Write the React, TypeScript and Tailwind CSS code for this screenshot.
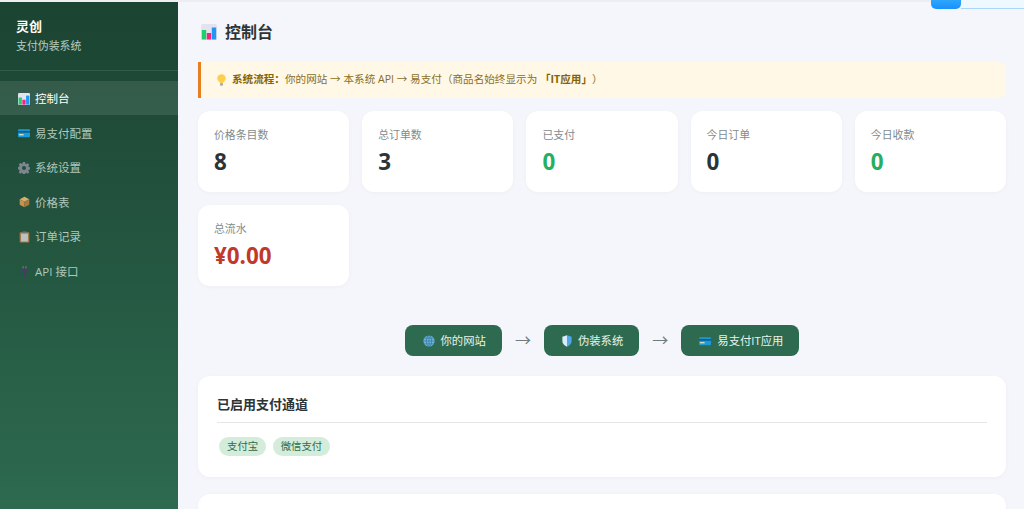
import React from "react";

const Chart = ({ s = 14 }: { s?: number }) => (
  <svg width={s} height={s} viewBox="0 0 16 16" className="shrink-0">
    <rect x="0" y="0" width="16" height="16" rx="1.5" fill="#e4e2ee" />
    <rect x="0.8" y="6" width="4.4" height="9.5" fill="#1fcf6c" />
    <rect x="5.8" y="9" width="4.4" height="6.5" fill="#f0267f" />
    <rect x="10.8" y="3.5" width="4.4" height="12" fill="#2196f3" />
  </svg>
);
const Card = ({ s = 12 }: { s?: number }) => (
  <svg width={s} height={s} viewBox="0 0 16 16" className="shrink-0">
    <rect x="0" y="3" width="16" height="10.5" rx="1.2" fill="#1d9bd8" />
    <rect x="0" y="5.2" width="16" height="2.4" fill="#0b5f8f" />
    <rect x="1.5" y="9.5" width="6" height="1.6" fill="#f5e6b8" />
  </svg>
);
const Gear = () => (
  <svg width="12" height="12" viewBox="0 0 16 16" className="shrink-0">
    <path
      fill="#7d8590"
      fillRule="evenodd"
      d="M6.6 0h2.8l.4 2.2 1.3.6 1.9-1.2 2 2-1.2 1.9.6 1.3 2.1.4v2.8l-2.1.4-.6 1.3 1.2 1.9-2 2-1.9-1.2-1.3.6-.4 2.2H6.6l-.4-2.2-1.3-.6-1.9 1.2-2-2 1.2-1.9-.6-1.3L-.5 9.6V6.8l2.1-.4.6-1.3L1 3.2l2-2 1.9 1.2 1.3-.6zM8 5.4a2.7 2.7 0 1 0 0 5.4 2.7 2.7 0 0 0 0-5.4z"
    />
  </svg>
);
const Box = () => (
  <svg width="11" height="12" viewBox="0 0 16 16" className="shrink-0">
    <path fill="#d9ad6c" d="M8 0.5 15 4 8 7.5 1 4z" />
    <path fill="#c49352" d="M1 4 8 7.5V15.5L1 12z" />
    <path fill="#a87a3c" d="M15 4 8 7.5V15.5L15 12z" />
  </svg>
);
const Clip = () => (
  <svg width="11" height="12" viewBox="0 0 16 16" className="shrink-0">
    <rect x="1" y="1" width="14" height="15" rx="1" fill="#a8794a" />
    <rect x="3" y="3" width="10" height="11.5" fill="#b9c4c2" />
    <rect x="5" y="0" width="6" height="2.5" fill="#6f767e" />
  </svg>
);
const Plug = () => (
  <svg width="11" height="13" viewBox="0 0 16 16" className="shrink-0">
    <rect x="5.2" y="0" width="1.5" height="4" fill="#777" />
    <rect x="9.3" y="0" width="1.5" height="4" fill="#777" />
    <path fill="#4a3a68" d="M4.5 4h7v3.5L9.2 10v6H6.8v-6L4.5 7.5z" />
  </svg>
);
const Bulb = () => (
  <svg width="9" height="12" viewBox="0 0 12 16" className="shrink-0">
    <circle cx="6" cy="5.8" r="5.6" fill="#fbcf4f" />
    <rect x="3.8" y="10" width="4.4" height="2" fill="#fbcf4f" />
    <rect x="4" y="12" width="4" height="3.5" rx="1" fill="#a9adb3" />
  </svg>
);
const Globe = () => (
  <svg width="12" height="12" viewBox="0 0 16 16" className="shrink-0">
    <circle cx="8" cy="8" r="7.5" fill="#6db4dd" />
    <g stroke="#2f6f92" strokeWidth="0.8" fill="none">
      <ellipse cx="8" cy="8" rx="3.5" ry="7.5" />
      <path d="M8 .5v15M.5 8h15M1.6 4.2h12.8M1.6 11.8h12.8" />
    </g>
  </svg>
);
const Shield = () => (
  <svg width="10" height="12" viewBox="0 0 14 16" className="shrink-0">
    <path fill="#4ca8ea" d="M7 0 13.5 2.2V8c0 4-3 6.6-6.5 8z" />
    <path fill="#d8ecfa" d="M7 0 .5 2.2V8c0 4 3 6.6 6.5 8z" />
  </svg>
);

const nav: [React.ReactNode, string, boolean?][] = [
  [<Chart s={12} />, "控制台", true],
  [<Card />, "易支付配置"],
  [<Gear />, "系统设置"],
  [<Box />, "价格表"],
  [<Clip />, "订单记录"],
  [<Plug />, "API 接口"],
];

const stats: [string, string, string][] = [
  ["价格条目数", "8", "text-[#2d3436]"],
  ["总订单数", "3", "text-[#2d3436]"],
  ["已支付", "0", "text-[#27ae60]"],
  ["今日订单", "0", "text-[#2d3436]"],
  ["今日收款", "0", "text-[#27ae60]"],
  ["总流水", "¥0.00", "text-[#c0392b]"],
];

const Pill = ({ icon, text }: { icon: React.ReactNode; text: string }) => (
  <div className="flex h-[31px] items-center gap-[6px] rounded-[8px] bg-[#2d6a4f] pl-[18px] pr-[16px] text-[11.35px] text-[#e8f3ec]">
    {icon}
    <span>{text}</span>
  </div>
);

const Arrow = () => <span className="-mt-[2px] text-[16px] leading-none text-[#6f7b7d]">→</span>;

export default function App() {
  return (
    <div className="relative flex h-[509px] w-[1024px] overflow-hidden bg-[#f4f6fb] font-['Open_Sans','Noto_Sans_CJK_SC',sans-serif]">
      <aside className="flex w-[178px] shrink-0 flex-col bg-gradient-to-b from-[#1b4332] to-[#2d6a4f]">
        <div className="h-[71px] border-b border-[#ffffff1a] px-4 pt-[17px]">
          <div className="text-[13px] font-bold leading-[18px] text-white">灵创</div>
          <div className="mt-[3px] text-[10.9px] leading-[16px] text-[#b6cdc1]">支付伪装系统</div>
        </div>
        <nav className="mt-[10px] flex flex-col gap-[0.3px]">
          {nav.map(([icon, label, active]) => (
            <div
              key={label}
              className={`flex h-[34.3px] items-center gap-[5px] pb-0 pl-[18px] pt-[1px] text-[11.5px] ${
                active ? "bg-[#ffffff1a] text-white" : "text-[#b0c7bb]"
              }`}
            >
              <span className="flex w-3 justify-center">{icon}</span>
              <span>{label}</span>
            </div>
          ))}
        </nav>
      </aside>

      <main className="min-w-0 flex-1 pl-5 pr-[18px] pt-[22px]">
        <h1 className="flex h-[20px] items-center gap-2 pl-[3px] text-[16px] font-bold text-[#2d3436]">
          <Chart s={16} />
          <span>控制台</span>
        </h1>
        <div className="mt-5 flex h-[36px] items-center gap-[6px] rounded-r-lg border-l-[3px] border-[#e67e22] bg-[#fff8e6] pl-4 text-[10.6px] text-[#8a6d1f] [text-spacing-trim:space-all]">
          <Bulb />
          <span>
            <b className="font-bold text-[#856404]">系统流程：</b>你的网站 → 本系统 API → 易支付（商品名始终显示为 <b className="font-bold text-[#856404]">「IT应用」</b>）
          </span>
        </div>

        <div className="mt-[13px] grid grid-cols-5 gap-[13px]">
          {stats.map(([label, value, color]) => (
            <div key={label} className="h-[81px] rounded-[12px] bg-white pl-4 pt-[15px] shadow-[0_1px_4px_rgba(0,0,0,0.03)]">
              <div className="text-[10.88px] leading-[18px] text-[#7f8c8d]">{label}</div>
              <div className={`mt-[2px] text-[22.4px] font-bold leading-[32px] ${color}`}>{value}</div>
            </div>
          ))}
        </div>

        <div className="mt-[39px] flex items-center justify-center gap-[13px]">
          <Pill icon={<Globe />} text="你的网站" />
          <Arrow />
          <Pill icon={<Shield />} text="伪装系统" />
          <Arrow />
          <Pill icon={<Card />} text="易支付IT应用" />
        </div>

        <section className="mt-5 h-[101px] rounded-[12px] bg-white px-[19px] pt-[19px] shadow-[0_1px_4px_rgba(0,0,0,0.03)]">
          <h2 className="h-[28px] border-b border-[#e4e6e8] text-[13px] font-bold leading-[19px] text-[#2d3436]">已启用支付通道</h2>
          <div className="mt-[14px] flex gap-[6.5px] pl-[2px]">
            <span className="flex h-[19px] items-center rounded-full bg-[#d4edda] px-2 text-[10.4px] text-[#2d6a4f]">支付宝</span>
            <span className="flex h-[19px] items-center rounded-full bg-[#d4edda] px-2 text-[10.4px] text-[#2d6a4f]">微信支付</span>
          </div>
        </section>

        <section className="mt-[17px] h-[60px] rounded-[12px] bg-white shadow-[0_1px_4px_rgba(0,0,0,0.03)]" />
      </main>

      <div className="absolute inset-x-0 top-0 h-[2px] bg-[#eceef1]" />
      <div className="absolute right-0 top-0 h-[9px] w-[63px] border-b border-[#a9d6fb] bg-[#eef8ff]" />
      <div className="absolute left-[931px] top-0 h-[9px] w-[30px] rounded-b-[5px] bg-gradient-to-b from-[#2da6fb] to-[#1890ff]" />
    </div>
  );
}
